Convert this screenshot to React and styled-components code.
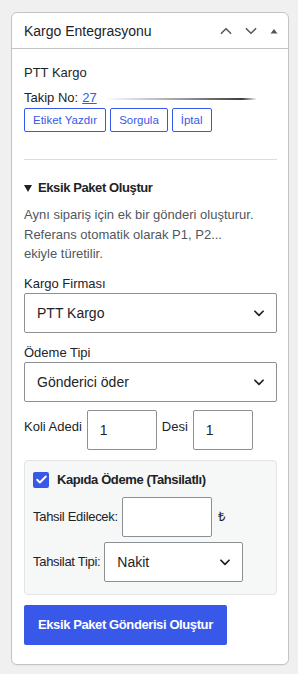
import React from 'react';
import styled, { createGlobalStyle } from 'styled-components';

const Global = createGlobalStyle`
  body {
    margin: 0;
    background: #f0f0f1;
    font-family: "Liberation Sans", Arial, sans-serif;
    color: #1d2327;
  }
`;

const Page = styled.div`
  padding: 12px 9px 10px 11px;
`;

const Card = styled.div`
  background: #fff;
  border: 1px solid #c3c4c7;
  border-radius: 6px;
  box-shadow: 0 1px 1px rgba(0, 0, 0, 0.04);
`;

const Header = styled.div`
  display: flex;
  align-items: center;
  height: 35px;
  padding: 0 9px 0 12px;
  border-bottom: 1px solid #c3c4c7;
`;

const Title = styled.h2`
  flex: 1;
  margin: 0;
  font-size: 14px;
  font-weight: 400;
  color: #1d2327;
`;

const HeadIcons = styled.div`
  display: flex;
  align-items: center;
  gap: 11px;
  color: #50575e;
`;

const Body = styled.div`
  padding: 15px 11px 19px 12px;
  font-size: 13px;
`;

const Carrier = styled.div`
  font-size: 13px;
  line-height: 18px;
  color: #1d2327;
`;

const Tracking = styled.div`
  display: flex;
  align-items: center;
  margin-top: 7px;
  line-height: 18px;
`;

const Link = styled.a`
  color: #3858e9;
  text-decoration: underline;
  margin-left: 4px;
`;

const Smudge = styled.span`
  display: block;
  width: 152px;
  height: 2px;
  margin-left: 8px;
  margin-top: 2px;
  border-radius: 2px;
  background: linear-gradient(90deg, rgba(80, 80, 80, 0), rgba(60, 60, 60, 0.5) 50%, rgba(40, 40, 40, 0.9) 90%, rgba(40, 40, 40, 0));
`;

const Buttons = styled.div`
  display: flex;
  gap: 4px;
  margin-top: 1px;
`;

const SmallButton = styled.button`
  height: 24px;
  padding: 0 8px;
  border: 1px solid #3858e9;
  border-radius: 2px;
  background: #fff;
  color: #3858e9;
  font: 11.5px "Liberation Sans", Arial, sans-serif;
`;

const Divider = styled.hr`
  margin: 27px 0 19px;
  border: 0;
  border-top: 1px solid #dcdcde;
`;

const Summary = styled.div`
  display: flex;
  align-items: center;
  gap: 6px;
  font-weight: 700;
  font-size: 13px;
  letter-spacing: -0.4px;
  line-height: 18px;
`;

const Caret = styled.span`
  width: 0;
  height: 0;
  border-left: 4px solid transparent;
  border-right: 4px solid transparent;
  border-top: 7px solid #1d2327;
`;

const Desc = styled.p`
  margin: 8px 0 0;
  color: #50575e;
  line-height: 19.5px;
`;

const Label = styled.div`
  margin-top: 11px;
  line-height: 18px;
  color: #1d2327;
`;

const SelectBox = styled.div`
  display: flex;
  align-items: center;
  justify-content: space-between;
  box-sizing: border-box;
  width: ${(p) => p.$width || '100%'};
  height: 40px;
  padding: 0 10px 0 12px;
  border: 1px solid #8c8f94;
  border-radius: 2px;
  background: #fff;
  font-size: 14px;
  color: #1d2327;
`;

const Row = styled.div`
  display: flex;
  align-items: center;
  gap: ${(p) => p.$gap || '6px'};
  margin-top: ${(p) => p.$mt || '0'};
`;

const RowLabel = styled.span`
  align-self: ${(p) => (p.$top ? 'flex-start' : 'center')};
  margin-top: ${(p) => (p.$top ? '8px' : '0')};
  line-height: 18px;
  letter-spacing: ${(p) => (p.$tight ? '-0.3px' : '0')};
  color: #1d2327;
`;

const Input = styled.div`
  box-sizing: border-box;
  width: ${(p) => p.$width};
  height: 40px;
  padding: 0 12px;
  display: flex;
  align-items: center;
  border: 1px solid #8c8f94;
  border-radius: 2px;
  background: #fff;
  font-size: 14px;
`;

const CodBox = styled.div`
  margin-top: 10px;
  padding: 10px 8px 12px;
  background: #f6f7f7;
  border: 1px solid #e2e4e7;
  border-radius: 4px;
`;

const Check = styled.span`
  display: flex;
  align-items: center;
  justify-content: center;
  width: 16px;
  height: 16px;
  border-radius: 2px;
  background: #3858e9;
`;

const CheckLabel = styled.span`
  font-weight: 700;
  letter-spacing: -0.4px;
  line-height: 18px;
`;

const Primary = styled.button`
  margin-top: 10px;
  height: 40px;
  padding: 0 14px;
  border: 0;
  border-radius: 2px;
  background: #3858e9;
  color: #fff;
  font: 700 13px "Liberation Sans", Arial, sans-serif;
  letter-spacing: -0.4px;
`;

const Chevron = ({ up, size = 12 }) => (
  <svg width={size} height={size} viewBox="0 0 24 24" fill="none" stroke="currentColor" strokeWidth="2.6" strokeLinecap="round" strokeLinejoin="round">
    <path d={up ? 'M4 16l8-8 8 8' : 'M4 8l8 8 8-8'} />
  </svg>
);

const Select = ({ value, width }) => (
  <SelectBox $width={width}>
    <span>{value}</span>
    <svg width="14" height="14" viewBox="0 0 24 24" fill="none" stroke="#1d2327" strokeWidth="3" strokeLinecap="round" strokeLinejoin="round">
      <path d="M5 9l7 7 7-7" />
    </svg>
  </SelectBox>
);

const App = () => (
  <Page>
    <Global />
    <Card>
      <Header>
        <Title>Kargo Entegrasyonu</Title>
        <HeadIcons>
          <Chevron up size={14} />
          <Chevron size={14} />
          <svg width="10" height="10" viewBox="0 0 10 10"><path d="M1.5 7.5L5 3l3.5 4.5z" fill="#50575e" /></svg>
        </HeadIcons>
      </Header>
      <Body>
        <Carrier>PTT Kargo</Carrier>
        <Tracking>
          Takip No:<Link href="#">27</Link>
          <Smudge />
        </Tracking>
        <Buttons>
          <SmallButton>Etiket Yazdır</SmallButton>
          <SmallButton>Sorgula</SmallButton>
          <SmallButton>İptal</SmallButton>
        </Buttons>
        <Divider />
        <Summary>
          <Caret />
          Eksik Paket Oluştur
        </Summary>
        <Desc>
          Aynı sipariş için ek bir gönderi oluşturur.
          <br />
          Referans otomatik olarak P1, P2...
          <br />
          ekiyle türetilir.
        </Desc>
        <Label>Kargo Firması</Label>
        <Select value="PTT Kargo" />
        <Label>Ödeme Tipi</Label>
        <Select value="Gönderici öder" />
        <Row $mt="8px" $gap="5px">
          <RowLabel $top>Koli Adedi</RowLabel>
          <Input $width="70px">1</Input>
          <RowLabel $top>Desi</RowLabel>
          <Input $width="60px">1</Input>
        </Row>
        <CodBox>
          <Row $gap="8px">
            <Check>
              <svg width="13" height="13" viewBox="0 0 24 24" fill="none" stroke="#fff" strokeWidth="3.5" strokeLinecap="round" strokeLinejoin="round">
                <path d="M4 12.5l5 5L20 6.5" />
              </svg>
            </Check>
            <CheckLabel>Kapıda Ödeme (Tahsilatlı)</CheckLabel>
          </Row>
          <Row $mt="8px" $gap="4px">
            <RowLabel $tight>Tahsil Edilecek:</RowLabel>
            <Input $width="90px" />
            <RowLabel style={{ marginLeft: 2 }}>₺</RowLabel>
          </Row>
          <Row $mt="5px" $gap="4px">
            <RowLabel $tight>Tahsilat Tipi:</RowLabel>
            <Select value="Nakit" width="139px" />
          </Row>
        </CodBox>
        <Primary>Eksik Paket Gönderisi Oluştur</Primary>
      </Body>
    </Card>
  </Page>
);

export default App;
